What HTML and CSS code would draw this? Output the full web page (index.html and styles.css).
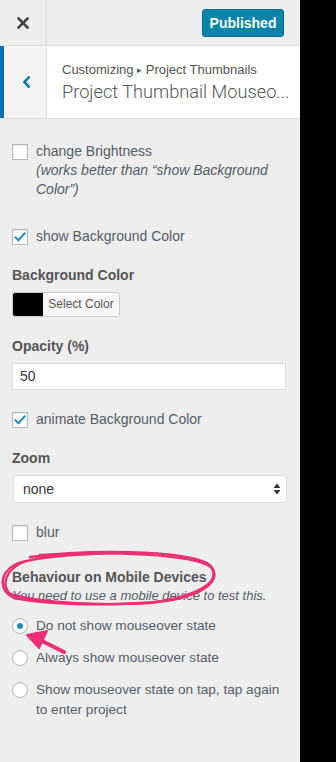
FILE: index.html
```html
<!doctype html>
<html lang="en">
	<head>
		<meta charset="UTF-8">
		<meta name="viewport" content="width=device-width, initial-scale=1.0">
		<title>Customizing: Project Thumbnail Mouseover</title>
		<link rel="stylesheet" href="styles.css">
	</head>
	<body>

		<div class="panel">

			<div class="topbar">
				<div class="close">
					<svg width="12" height="12" viewBox="0 0 12 12"><path d="M1.5 1.5 L10.5 10.5 M10.5 1.5 L1.5 10.5" stroke="#444" stroke-width="2.6" stroke-linecap="square"/></svg>
				</div>
				<button type="button" class="publish">Published</button>
			</div>

			<div class="info">
				<div class="back">
					<svg width="10" height="14" viewBox="0 0 10 14"><path d="M7.5 1.5 L2.5 7 L7.5 12.5" stroke="#0073aa" stroke-width="2.6" fill="none"/></svg>
				</div>
				<div class="titles">
					<div class="crumb">Customizing <span class="tri">&#9656;</span> Project Thumbnails</div>
					<div class="title">Project Thumbnail Mouseo...</div>
				</div>
			</div>

			<div class="controls">

				<div class="ctrl first">
					<label class="row"><span class="cb"></span> change Brightness</label>
					<div class="note">(works better than “show Background Color”)</div>
				</div>

				<div class="ctrl">
					<label class="row"><span class="cb on"></span> show Background Color</label>
				</div>

				<div class="ctrl">
					<div class="head">Background Color</div>
					<div class="picker"><span class="swatch"></span><span class="pick">Select Color</span></div>
				</div>

				<div class="ctrl">
					<div class="head">Opacity (%)</div>
					<div class="field">50</div>
				</div>

				<div class="ctrl">
					<label class="row"><span class="cb on"></span> animate Background Color</label>
				</div>

				<div class="ctrl">
					<div class="head">Zoom</div>
					<div class="select">none
						<svg width="8" height="12" viewBox="0 0 8 12"><path d="M4 0.5 L7.5 5 L0.5 5 Z M4 11.5 L7.5 7 L0.5 7 Z" fill="#333"/></svg>
					</div>
				</div>

				<div class="ctrl last">
					<label class="row"><span class="cb"></span> blur</label>
				</div>

				<div class="ctrl">
					<div class="head">Behaviour on Mobile Devices</div>
					<div class="desc">You need to use a mobile device to test this.</div>
					<label class="radio"><span class="rb on"></span> Do not show mouseover state</label>
					<label class="radio"><span class="rb"></span> Always show mouseover state</label>
					<label class="radio"><span class="rb"></span> Show mouseover state on tap, tap again to enter project</label>
				</div>

			</div>

			<!-- hand drawn marks on top of the screenshot -->
			<svg class="marks" width="300" height="762" viewBox="0 0 300 762">
				<g fill="none" stroke="#ec2f73" stroke-width="2.4" stroke-linecap="round">
					<path d="M30 557 C90 549 180 550 207 563 C223 574 214 592 172 600 C120 607 50 605 14 598 C-1 591 -2 574 16 564 C40 555 110 552 150 553"/>
					<path d="M40 555 C110 551 192 554 211 567 C221 581 201 596 150 603 C100 606 40 603 10 594 C1 585 5 569 26 561"/>
				</g>
				<path d="M64 652 L40 640" stroke="#ec2f73" stroke-width="4" stroke-linecap="round"/>
				<path d="M27 635 L47 631 L39 648 Z" fill="#ec2f73" stroke="#ec2f73" stroke-width="2" stroke-linejoin="round"/>
			</svg>

		</div>

	</body>
</html>
```

FILE: styles.css
```css
*{
	box-sizing:border-box;
}

body
{
	margin:0;
	background-color:#000;
	font-family:"Liberation Sans", Arial, sans-serif;
	color:#555d66;
}

.panel
{
	position:relative;
	width:300px;
	min-height:762px;
	background-color:#eee;
}

.topbar
{
	display:flex;
	align-items:center;
	height:46px;
	border-bottom:1px solid #ddd;
}

.close
{
	display:flex;
	align-items:center;
	justify-content:center;
	width:47px;
	height:45px;
	border-right:1px solid #ddd;
}

.publish
{
	margin-left:auto;
	margin-right:16px;
	width:82px;
	height:28px;
	border:1px solid #006e94;
	border-radius:3px;
	background-color:#0a83a8;
	color:#fff;
	font-family:inherit;
	font-size:14px;
	font-weight:bold;
	padding:0;
}

.info
{
	display:flex;
	height:73px;
	background-color:#fff;
	border-bottom:1px solid #ddd;
}

.back
{
	display:flex;
	align-items:center;
	justify-content:center;
	width:47px;
	padding-left:4px;
	border-left:4px solid #0073aa;
	border-right:1px solid #ddd;
	background-color:#f3f3f3;
}

.titles
{
	flex:1;
	min-width:0;
	padding:15px 8px 0 15px;
}

.crumb
{
	font-size:13px;
	line-height:18px;
	color:#555;
}

.tri
{
	font-size:9px;
	vertical-align:1px;
}

.title
{
	font-family:Roboto, "Liberation Sans", sans-serif;
	font-size:18.2px;
	font-weight:300;
	line-height:26px;
	color:#555;
	white-space:nowrap;
}

.controls
{
	padding:23px 12px 0 12px;
}

.ctrl
{
	margin-bottom:20px;
	font-size:14px;
	line-height:19px;
}

.ctrl.first
{
	margin-bottom:29px;
}

.ctrl.last
{
	margin-bottom:26px;
}

.row
{
	display:flex;
	align-items:center;
	gap:8px;
}

.cb
{
	position:relative;
	flex:none;
	width:16px;
	height:16px;
	background-color:#fff;
	border:1px solid #b4b9be;
	box-shadow:inset 0 1px 2px rgba(0,0,0,0.1);
}

.cb.on::after
{
	content:"";
	position:absolute;
	left:4px;
	top:0px;
	width:4px;
	height:9px;
	border-right:2.5px solid #1e8cbe;
	border-bottom:2.5px solid #1e8cbe;
	transform:rotate(42deg);
}

.note
{
	padding-left:24px;
	font-style:italic;
	line-height:18.5px;
}

.head
{
	font-weight:bold;
	color:#555;
	margin-bottom:7px;
}

.picker
{
	display:flex;
	width:108px;
	height:25px;
	border:1px solid #ccc;
	border-radius:3px;
	background-color:#f7f7f7;
	overflow:hidden;
}

.swatch
{
	width:30px;
	background-color:#000;
}

.pick
{
	flex:1;
	font-size:12px;
	line-height:23px;
	text-align:center;
	color:#555;
}

.field
{
	width:274px;
	height:27px;
	padding-left:7px;
	background-color:#fff;
	border:1px solid #ddd;
	line-height:25px;
	color:#32373c;
}

.select
{
	display:flex;
	align-items:center;
	justify-content:space-between;
	width:274px;
	height:28px;
	margin-left:1px;
	padding:0 5px 0 9px;
	background-color:#fff;
	border:1px solid #ddd;
	border-radius:4px;
	color:#32373c;
}

.desc
{
	margin-top:-7px;
	font-size:13px;
	font-style:italic;
	line-height:18px;
	margin-bottom:11px;
}

.radio
{
	display:flex;
	align-items:flex-start;
	gap:8px;
	margin-bottom:12px;
	line-height:20px;
	font-size:13.6px;
}

.rb
{
	position:relative;
	flex:none;
	width:16px;
	height:16px;
	margin-top:2px;
	border:1px solid #b4b9be;
	border-radius:50%;
	background-color:#fff;
	box-shadow:inset 0 1px 2px rgba(0,0,0,0.1);
}

.rb.on::after
{
	content:"";
	position:absolute;
	left:4px;
	top:4px;
	width:6px;
	height:6px;
	border-radius:50%;
	background-color:#1e8cbe;
}

.marks
{
	position:absolute;
	left:0;
	top:0;
	pointer-events:none;
}
```
